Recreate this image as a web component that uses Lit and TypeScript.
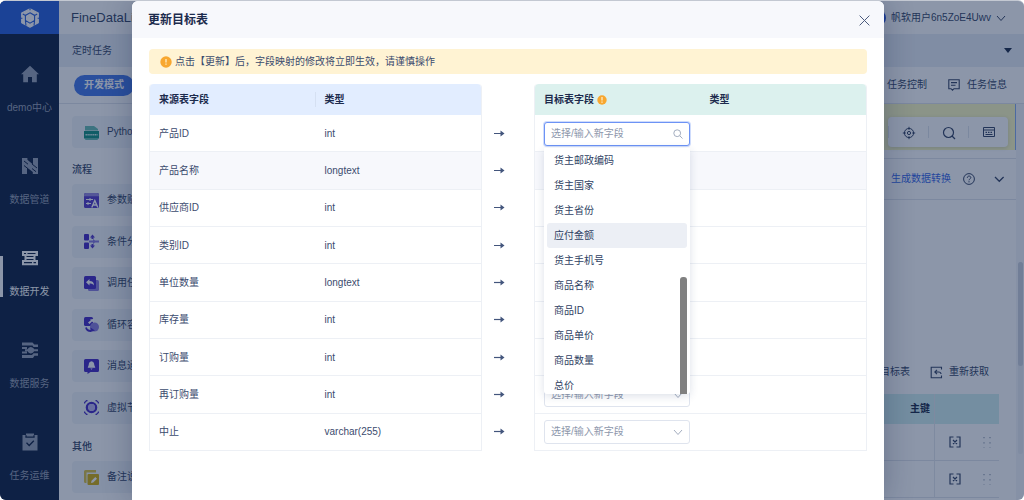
import { LitElement, html, svg, css, TemplateResult, SVGTemplateResult } from "lit";
import { customElement } from "lit/decorators.js";
import { classMap } from "lit/directives/class-map.js";

type Icon = SVGTemplateResult;

const icon = (size: number, body: Icon, cls = ""): TemplateResult => html`<svg
  class="icon ${cls}" width=${size} height=${size} viewBox="0 0 ${size} ${size}" fill="none" aria-hidden="true">${body}</svg>`;

const logo = svg`
  <path fill="#fff" stroke="#fff" stroke-width="1.200" stroke-linejoin="round" d="M10 .8 18.300 5v9.800L10 19.200 1.700 14.800V5Z"/>
  <path stroke="#1c56d8" stroke-width="1.100" d="M10 4.800 14.600 7.400v5L10 15.100 5.400 12.400v-5ZM10 0v2.200M5.400 7.400 2.800 6M14.600 7.400 17.200 6M0 10.200h2.400M20 10.200h-2.400M5.400 12.800l.6 4.800M14.600 12.800l-.6 4.800"/>`;

const navIcons: Record<string, Icon> = {
  home: svg`<path fill="currentColor" d="M9 .8 18 9.200h-2.200V17.200H11V12H7v5.200H2.200V9.200H0Z"/>`,
  pipe: svg`<path fill="currentColor" d="M1 1h5.400v1.800L12 7.600V1h5v16h-5.200v-2L6 10.400V17H1Z"/>
    <path stroke="#021436" stroke-width="1" d="m3 4 4 3.200M3 8.500l3.500 2.800M11 7l5 4M11 11.500l4 3.200"/>`,
  dev: svg`<path fill="currentColor" d="M1 2h16v5h-2.500v4H17v5.200H1V11h2.500V7H1Z"/>
    <path stroke="#021436" stroke-width="1.200" d="M3 4.500h2M6.500 4.500h8M3 13.600h8M12.500 13.600h2.500M5.500 7.500h7M5.500 10.500h7"/>`,
  service: svg`<path fill="currentColor" d="M1 1.500h10.500l1.800 2H17v2.400h-4.500l-1-1.500H1ZM1 14h10l1.500-1.700H17v2.500h-3.500L12 17H1ZM1 6h5v2H1ZM1 10.500h5v2H1ZM9.500 6A3.600 3.600 0 0 0 6.600 8.200H4v2h2.600A3.600 3.600 0 0 0 9.500 12.400c2 0 3-1 3.600-2.200H17v-2h-3.900C12.500 7 11.500 6 9.500 6Z"/>`,
  ops: svg`<path fill="currentColor" d="M1.500 2H5V.5h8V2h3.500v15.500h-15Z"/>
    <path stroke="#021436" stroke-width="1.300" d="M5 2.200v2h8v-2M5.500 9.800l2.700 2.700 4.600-4.800"/>`,
};

const nodeIcons: Record<string, Icon> = {
  python: svg`<path fill="#1fa08c" d="M1 1h9l4 3v1.600H1ZM1 13.400h13V14a1 1 0 0 1-1 1H2a1 1 0 0 1-1-1Z" opacity=".7"/>
    <path fill="#078a78" d="M0 6h15v7.500H0Z"/><path stroke="#cfeae6" stroke-width="1.600" stroke-dasharray="1.400 .5" d="M1.500 9.800h12"/>`,
  param: svg`<rect width="15" height="15" rx="1.500" fill="#4a2fc4"/><path fill="#8f80dc" d="M0 2a2 2 0 0 1 2-2h11a2 2 0 0 1 2 2v1.200H0Z"/>
    <path stroke="#fff" d="M2 6.500h7M6 5v3M2 10.500h5M4 9v3"/><path stroke="#fff" stroke-width="1.400" d="m7.800 14.500 3-7 3 7M9 12h4"/>`,
  branch: svg`<rect width="5" height="6.500" rx="1" fill="#3a1fc0"/><rect y="8.500" width="5" height="6.500" rx="1" fill="#3a1fc0"/>
    <path fill="#8272dc" d="M5 6.500h4V5l2 1.600h4v1.800h-4L9 10V8.500H5Z"/><path fill="#4a2fc4" d="m8.500.5 2.500 3H9.500V5h-2V3.500H6ZM8.500 14.500l2.500-3H9.500V10h-2v1.500H6Z"/>`,
  call: svg`<rect x="4" y="4" width="11" height="11" rx="1.500" fill="#8577dc"/><rect width="12" height="13" rx="1.500" fill="#3a1fc0"/>
    <path fill="#fff" d="M5.500 3v2c3 0 4.500 1.400 4.500 4.500C9 7.800 7.700 7.400 5.500 7.400v2L2 6.200Z"/>`,
  loop: svg`<rect width="9" height="9" rx="1.500" fill="#3a1fc0"/><circle cx="10.500" cy="10" r="4.500" fill="#8577dc"/>
    <path fill="#fff" d="M6 2.500 9.500 2v3.500L8 4.500 5.500 7 4 5.500 6.800 3.300Z"/><path stroke="#3a1fc0" stroke-width="1.800" d="M2 10.500c.5 2.500 2 3.500 5 3.500"/><path fill="#3a1fc0" d="m6.500 10.500 4.500 3-4.500 1.500Z"/>`,
  notice: svg`<path fill="#3a1fc0" d="M1.500 0h12A1.500 1.500 0 0 1 15 1.500v10a1.500 1.500 0 0 1-1.500 1.500H6.500l-3 2V13h-2A1.500 1.500 0 0 1 0 11.500v-10A1.500 1.500 0 0 1 1.500 0Z"/>
    <path fill="#fff" d="M7.500 2.200c2 .4 2.800 1.900 2.800 3.800l1 2.700H3.700l1-2.700c0-1.900.8-3.400 2.800-3.800ZM6.300 9.400h2.400L7.500 10.800Z"/>`,
  virtual: svg`<circle cx="7.500" cy="7.500" r="4.600" stroke="#3a1fc0" stroke-width="2.400"/><circle cx="7.500" cy="7.500" r="3.400" fill="#b8b0ee"/>
    <path stroke="#3a1fc0" stroke-width="1.200" d="M.6 3.500V2.600l2-2h.9M14.400 3.500V2.600l-2-2h-.9M.6 11.500v.9l2 2h.9M14.400 11.500v.9l-2 2h-.9"/>`,
  note: svg`<path fill="#d8bf3a" d="M1.500 0H12v2.500H2.500V13H1.500A1.500 1.500 0 0 1 0 11.500v-10A1.500 1.500 0 0 1 1.500 0Z"/><rect x="3.500" y="4" width="11.500" height="11" rx="1" fill="#d0ab00"/>
    <path fill="#fff" d="m7 13 .5-2.200 3.800-3.800 1.700 1.700-3.800 3.800Z"/>`,
};

const arrow = svg`<path stroke="#43557c" stroke-width="1.200" d="M1 5.500h8"/><path fill="#43557c" d="M7.500 2.500 11.500 5.500 7.500 8.500Z"/>`;
const chevron = svg`<path stroke="currentColor" stroke-width="1" d="m1 3 4 4.500L9 3"/>`;
const warn = (r: number): Icon => svg`<circle cx=${r} cy=${r} r=${r - 0.3} fill="#f8a72f"/><path stroke="#fff3d3" stroke-width="1.200" d="M${r} ${r - 3}v3.500M${r} ${r + 1.500}v1.300"/>`;

@customElement("app-nav")
export class AppNav extends LitElement {
  static styles = css`
    :host { display: block; background: #021436; color: #939cb0; }
    .logo { display: grid; place-items: center; height: 33px; background: #1c56d8; }
    .list { margin: 0; padding: 15px 0 0; list-style: none; }
    .item { height: 92px; }
    .link {
      box-sizing: border-box; display: flex; flex-direction: column; align-items: center; gap: 15px;
      padding-top: 16px; color: inherit; text-decoration: none; line-height: 20px; white-space: nowrap; height: 92px;
    }
    .active { color: #fff; background: linear-gradient(#fff, #fff) 0 23px / 3px 41px no-repeat; }
    .icon { display: block; }
  `;
  private items = [
    ["home", "demo中心"], ["pipe", "数据管道"], ["dev", "数据开发"], ["service", "数据服务"], ["ops", "任务运维"],
  ];
  render() {
    return html`<div class="logo">${icon(20, logo)}</div>
      <ul class="list">
        ${this.items.map(([key, label]) => html`<li class="item">
          <a href="#${key}" class=${classMap({ link: true, active: key === "dev" })}>${icon(18, navIcons[key])}<span>${label}</span></a>
        </li>`)}
      </ul>`;
  }
}

@customElement("node-palette")
export class NodePalette extends LitElement {
  static styles = css`
    :host { display: block; box-sizing: border-box; padding: 12px 13px; color: #2b3a5c; }
    .title { margin: 0; font-size: 10px; line-height: 20px; font-weight: 500; }
    .group { display: grid; align-content: space-between; margin-bottom: 12px; }
    .many { height: 240px; margin: 4px 0 13px; }
    .last { margin-top: 4px; }
    .node {
      display: flex; align-items: center; gap: 8px; height: 32px; padding: 0 12px; border: 0; border-radius: 4px;
      background: #f1f4f8; color: inherit; font: inherit; white-space: nowrap;
    }
    .icon { flex: none; }
  `;
  private node(key: string, label: string) {
    return html`<button class="node" type="button">${icon(15, nodeIcons[key])}${label}</button>`;
  }
  render() {
    return html`
      <div class="group">${this.node("python", "Python算子")}</div>
      <h3 class="title">流程</h3>
      <div class="group many">
        ${this.node("param", "参数赋值")}${this.node("branch", "条件分支")}${this.node("call", "调用任务")}
        ${this.node("loop", "循环容器")}${this.node("notice", "消息通知")}${this.node("virtual", "虚拟节点")}
      </div>
      <h3 class="title">其他</h3>
      <div class="group last">${this.node("note", "备注说明")}</div>`;
  }
}

@customElement("task-workspace")
export class TaskWorkspace extends LitElement {
  static styles = css`
    :host { display: flex; min-width: 0; color: #2b3a5c; }
    .main { flex: 1; min-width: 0; display: flex; flex-direction: column; }
    .canvas { display: flex; justify-content: flex-end; box-sizing: border-box; height: 46px; padding: 13px 7px 3px; background: #fdfbbd; border-right: 1px solid #7ea6ee; }
    .tools { display: flex; align-items: center; background: #fff; border-radius: 4px; box-shadow: 0 1px 4px rgba(30, 50, 90, 0.2); }
    .tool { display: grid; place-items: center; width: 40px; height: 12px; padding: 0; border: 0; border-left: 1px solid #dde2ea; background: none; color: inherit; }
    .bar { display: flex; align-items: center; justify-content: flex-end; gap: 12px; height: 40px; margin-top: 8px; padding-right: 5px; border: solid #dfe3ea; border-width: 1px 0; }
    .link { color: #2c5ce6; text-decoration: none; }
    .plain { display: flex; align-items: center; padding: 0; border: 0; background: none; color: inherit; font: inherit; gap: 6px; }
    .actions { display: flex; justify-content: flex-end; gap: 20px; height: 20px; margin: 162px 27px 12px 0; }
    .fields { width: calc(100% - 17px); border-spacing: 0; table-layout: fixed; }
    .head { height: 30px; padding: 0; background: #cfeeee; text-align: center; font-weight: 700; color: #10203f; white-space: nowrap; }
    .cell { height: 36px; padding: 0; border-bottom: 1px solid #dfe3ea; }
    .key { width: 28px; }
    .ops { width: 64px; border-left: 1px solid #e2e6ec; }
    .pair { display: flex; justify-content: space-between; align-items: center; padding: 0 6px 0 14px; }
    .gutter { width: 8px; padding-top: 158px; background: #f3f5f8; }
    .track { height: 192px; width: 5px; margin: 0 auto; background: #e6eaf0; border-radius: 3px; }
    .thumb { height: 104px; background: #c9cfda; border-radius: 3px; }
  `;
  render() {
    const remove = svg`<path stroke="currentColor" stroke-width="1.200" d="M4.500 1H1v10h3.500M7.500 1H11v10H7.500M4 4l4 4M8 4 4 8"/>`;
    const dots = svg`<path stroke="#8c97ac" stroke-width="1.200" stroke-dasharray="1.200 4" d="M3 1v12M9 1v12"/>`;
    const row = () => html`<tr><td class="cell"></td><td class="cell"></td>
      <td class="cell ops"><div class="pair">${icon(12, remove)}${icon(12, dots)}</div></td></tr>`;
    return html`<div class="main">
        <div class="canvas"><div class="tools">
          <button class="tool" type="button" aria-label="定位">${icon(14, svg`<circle cx="7" cy="7" r="4.600" stroke="currentColor"/><circle cx="7" cy="7" r="1.600" stroke="currentColor"/><path stroke="currentColor" d="M7 .8v3M7 10.200v3M.8 7h3M10.200 7h3"/>`)}</button>
          <button class="tool" type="button" aria-label="搜索">${icon(14, svg`<circle cx="6.500" cy="6.500" r="5" stroke="currentColor" stroke-width="1.200"/><path stroke="currentColor" stroke-width="1.200" d="m10 10 3 3"/>`)}</button>
          <button class="tool" type="button" aria-label="面板">${icon(12, svg`<path stroke="currentColor" d="M.5 1.500h11v9H.5ZM.5 4h11M2.500 8.500h7"/><path stroke="currentColor" stroke-width="1.200" stroke-dasharray="1.500 1" d="M2.500 6.400h7"/>`)}</button>
        </div></div>
        <div class="bar"><a class="link" href="#transform">生成数据转换</a>
          <button class="plain" type="button" aria-label="帮助">${icon(12, svg`<circle cx="6" cy="6" r="5.400" stroke="currentColor"/><path stroke="currentColor" d="M4.300 4.800c0-2.400 3.500-2.200 3.500-.2C7.800 5.900 6 5.900 6 7.300M6 8.200v1.200"/>`)}</button>
          <button class="plain" type="button" aria-label="展开">${icon(24, svg`<path stroke="currentColor" stroke-width="1.300" d="m8 10 4.300 4.300L16.600 10"/>`)}</button>
        </div>
        <div class="actions"><button class="plain" type="button">修改目标表</button>
          <button class="plain" type="button">${icon(13, svg`<path stroke="currentColor" stroke-width="1.100" d="M11.500 3.500V1.200H1.200v10.600h10.300V9.500M5 6h3.500c2 0 2.500 1.200 2.500 2M7 3.800 4.800 6 7 8.200"/>`)}重新获取</button></div>
        <table class="fields"><thead><tr><th class="head"></th><th class="head key">主键</th><th class="head ops"></th></tr></thead>
          <tbody>${row()}${row()}</tbody></table>
      </div>
      <div class="gutter"><div class="track"><div class="thumb"></div></div></div>`;
  }
}

@customElement("field-picker")
export class FieldPicker extends LitElement {
  static properties = { open: { type: Boolean }, label: {} };
  declare open: boolean;
  declare label: string;
  static styles = css`
    :host { display: block; width: 146px; position: relative; }
    .box {
      display: block; box-sizing: border-box; width: 100%; height: 24px; margin: 0; padding: 0 24px 0 6px; appearance: none;
      border: 1px solid #dfe4ee; border-radius: 3px; background: #fff; color: #8d97ab; font: inherit; outline: none;
    }
    .box::placeholder { color: #8d97ab; opacity: 1; }
    .focus { border-color: #6d93f5; box-shadow: 0 0 0 1px #cfdcfc; }
    .mark { position: absolute; right: 7px; top: 7px; color: #a3adbf; pointer-events: none; }
    .menu {
      position: absolute; z-index: 2; top: 26px; left: 0; right: 0; height: 246px; overflow: hidden; background: #fff;
      border-radius: 0 0 3px 3px; box-shadow: 0 2px 8px rgba(40, 60, 110, 0.16);
    }
    .options { margin: 0; padding: 0 3px; list-style: none; color: #2f3f63; }
    .option { padding: 0 7px; line-height: 25px; border-radius: 3px; white-space: nowrap; }
    .hover { background: #eceff5; }
    .thumb { position: absolute; right: 3px; bottom: 0; width: 7px; height: 117px; background: #808080; border-radius: 3px 3px 0 0; }
  `;
  private options = ["货主邮政编码", "货主国家", "货主省份", "应付金额", "货主手机号", "商品名称", "商品ID", "商品单价", "商品数量", "总价"];
  render() {
    if (!this.open) {
      return html`<select class="box" aria-label=${this.label}><option>选择/输入新字段</option>${this.options.map((o) => html`<option>${o}</option>`)}</select>
        ${icon(10, chevron, "mark")}`;
    }
    return html`<input class="box focus" type="text" role="combobox" aria-expanded="true" aria-controls="menu" aria-label=${this.label} placeholder="选择/输入新字段" />
      ${icon(10, svg`<circle cx="4.200" cy="4.200" r="3.400" stroke="currentColor"/><path stroke="currentColor" d="m6.800 6.800 2.700 2.700"/>`, "mark")}
      <div class="menu"><ul class="options" id="menu" role="listbox">
        ${this.options.map((o) => html`<li role="option" class=${classMap({ option: true, hover: o === "应付金额" })}>${o}</li>`)}
      </ul><div class="thumb"></div></div>`;
  }
}

@customElement("update-dialog")
export class UpdateDialog extends LitElement {
  static styles = css`
    :host { display: block; min-height: 100%; background: #fff; border-radius: 6px 6px 0 0; color: #3b4b6e; box-shadow: 0 0 30px rgba(15, 30, 65, 0.3); }
    .header { box-sizing: border-box; display: flex; align-items: center; justify-content: space-between; height: 37px; padding: 1px 14px 0 16px; background: #f7f8fc; border-radius: 6px 6px 0 0; }
    .title { margin: 0; font-size: 12px; line-height: 20px; font-weight: 700; color: #1c2b4d; }
    .close { display: grid; padding: 0; border: 0; background: none; color: #4b5b7e; }
    .body { padding: 11px 17px; }
    .tip { display: flex; align-items: center; gap: 3px; height: 25px; margin: 0 0 10px; padding: 0 11px; background: #fff3d3; border-radius: 4px; }
    .mapping { display: grid; grid-template-columns: 1fr 52px 1fr; }
    .table { width: 100%; height: 367px; border-spacing: 0; table-layout: fixed; border-right: 1px solid #edf0f5; border-left: 1px solid #edf0f5; border-radius: 4px 4px 0 0; }
    .th { height: 31px; padding: 0 9px; text-align: left; font-weight: 700; color: #1c2b4d; background: #e2edff; }
    .th:first-child { border-top-left-radius: 4px; }
    .th:last-child { border-top-right-radius: 4px; }
    .target .th { background: #dcf1ee; }
    .split { background: linear-gradient(#d5e0f2, #d5e0f2) 100% 50% / 1px 15px no-repeat #e2edff; }
    .td { padding: 1px 9px 0; border-bottom: 1px solid #edf0f5; }
    .hover .td { background: #f7f8fc; }
    .with-mark { display: flex; align-items: center; gap: 3px; }
    .arrows { display: flex; flex-direction: column; margin: 0; padding: 31px 0 0; list-style: none; }
    .arrow { flex: 1; display: flex; align-items: center; padding-left: 11px; }
  `;
  private rows = [
    ["产品ID", "int"], ["产品名称", "longtext"], ["供应商ID", "int"], ["类别ID", "int"], ["单位数量", "longtext"],
    ["库存量", "int"], ["订购量", "int"], ["再订购量", "int"], ["中止", "varchar(255)"],
  ];
  render() {
    const hover = (i: number) => (i === 1 ? "hover" : "");
    return html`<header class="header"><h2 class="title">更新目标表</h2>
        <button class="close" type="button" aria-label="关闭">${icon(11, svg`<path stroke="currentColor" d="m.6.6 9.800 9.800M10.400.6.6 10.400"/>`)}</button></header>
      <div class="body">
        <p class="tip">${icon(12, warn(6))}<span>点击【更新】后，字段映射的修改将立即生效，请谨慎操作</span></p>
        <div class="mapping">
          <table class="table">
            <thead><tr><th class="th split">来源表字段</th><th class="th">类型</th></tr></thead>
            <tbody>${this.rows.map(([name, type], i) => html`<tr class=${hover(i)}><td class="td">${name}</td><td class="td">${type}</td></tr>`)}</tbody>
          </table>
          <ul class="arrows">${this.rows.map(() => html`<li class="arrow">${icon(12, arrow)}</li>`)}</ul>
          <table class="table target">
            <thead><tr><th class="th"><span class="with-mark">目标表字段${icon(10, warn(5))}</span></th><th class="th">类型</th></tr></thead>
            <tbody>${this.rows.map(([name], i) => html`<tr class=${hover(i)}>
              <td class="td"><field-picker .open=${i === 0} .label=${`${name} 目标表字段`}></field-picker></td><td class="td"></td></tr>`)}</tbody>
          </table>
        </div>
      </div>`;
  }
}

@customElement("app-root")
export class AppRoot extends LitElement {
  static styles = css`
    :host {
      display: block; position: relative; box-sizing: border-box; height: 100vh; overflow: hidden; border-radius: 6px;
      border-top: 1px solid #c3c8d2; background: #fff;
      font-family: "Liberation Sans", "Noto Sans CJK SC", sans-serif; font-size: 10px; line-height: 20px; color: #2b3a5c;
    }
    .shell { display: grid; grid-template-columns: 59px 1fr; height: 100%; }
    .page { display: flex; flex-direction: column; min-width: 0; }
    .top { display: flex; align-items: center; justify-content: space-between; height: 33px; padding: 0 18px 0 12px; }
    .brand { font-size: 13px; }
    .user { display: flex; align-items: center; gap: 5px; padding: 0; border: 0; background: none; color: inherit; font: inherit; }
    .avatar { width: 16px; height: 16px; border-radius: 50%; background: #1a48d8; }
    .crumb { display: flex; align-items: center; justify-content: space-between; height: 33px; padding: 0 12px 0 13px; background: #e7edf4; }
    .caret { border: 4px solid transparent; border-top: 5px solid #10203f; border-bottom: 0; }
    .toolbar { display: flex; align-items: center; justify-content: space-between; height: 36px; padding: 0 17px 0 15px; border-bottom: 1px solid #dfe3ea; }
    .mode { height: 21px; padding: 0 10px; border: 0; border-radius: 11px; background: #3a70e6; color: #fff; font: inherit; font-weight: 700; }
    .actions { display: flex; gap: 21px; }
    .action { display: flex; align-items: center; gap: 7px; padding: 0; border: 0; background: none; color: inherit; font: inherit; }
    .work { flex: 1; min-height: 0; display: grid; grid-template-columns: 200px 1fr; }
    .mask { position: absolute; inset: 0; box-sizing: border-box; padding: 0 140px 0 132px; background: rgba(26, 46, 84, 0.5); }
  `;
  render() {
    return html`<div class="shell">
        <app-nav></app-nav>
        <div class="page">
          <div class="top"><span class="brand">FineDataLink</span>
            <button class="user" type="button"><span class="avatar"></span>帆软用户6n5ZoE4Uwv${icon(10, chevron)}</button></div>
          <div class="crumb"><span>定时任务</span><span class="caret"></span></div>
          <div class="toolbar"><button class="mode" type="button">开发模式</button>
            <div class="actions"><button class="action" type="button">任务控制</button>
              <button class="action" type="button">${icon(12, svg`<path stroke="currentColor" stroke-width="1.100" d="M.8.8h10.400v8.900H6L4.500 11.200 3 9.700H.8ZM3 3.600h6M3 6.300h4.500"/>`)}任务信息</button></div></div>
          <div class="work"><node-palette></node-palette><task-workspace></task-workspace></div>
        </div>
      </div>
      <div class="mask"><update-dialog role="dialog" aria-modal="true" aria-label="更新目标表"></update-dialog></div>`;
  }
}
